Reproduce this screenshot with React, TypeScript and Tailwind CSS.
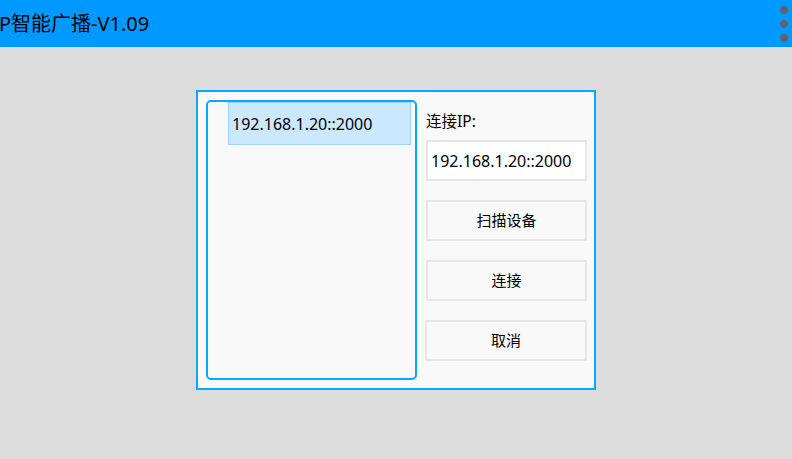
import React from "react";

const FONT = { fontFamily: '"Noto Sans", "Noto Sans CJK SC", sans-serif' };

export default function App() {
  const ip = "192.168.1.20::2000";
  return (
    <div className="w-[792px] h-[459px] bg-[#dcdcdc] overflow-hidden text-black" style={FONT}>
      {/* 标题栏 */}
      <div className="h-[47px] bg-[#0099ff] flex items-center justify-between">
        <span className="text-[20px] leading-none -ml-[1px]">P智能广播-V1.09</span>
        <div className="flex flex-col gap-[6px] pr-[4px]">
          <span className="block w-[8px] h-[8px] rounded-full bg-[#5f6272]" />
          <span className="block w-[8px] h-[8px] rounded-full bg-[#5f6272]" />
          <span className="block w-[8px] h-[8px] rounded-full bg-[#5f6272]" />
        </div>
      </div>

      {/* 连接对话框 */}
      <div className="ml-[196px] mt-[43px] w-[400px] h-[300px] border-2 border-[#00aaff] bg-[#f9f9f9] pl-2 pt-2 pr-[7px] flex gap-[9px]">
        <div className="w-[211px] shrink-0 h-[280px] border-2 border-[#00aaff] rounded-[5px] pl-[20px] pr-[4px]">
          <div className="h-[43px] bg-[#cce8ff] border border-[#99d1ff] flex items-center pl-[3px] text-[16px]">
            {ip}
          </div>
        </div>
        <div className="w-[161px] shrink-0 flex flex-col">
          <div className="h-[40px] flex items-end pb-[7px] text-[15.5px]">连接IP:</div>
          <div className="h-[41px] border-2 border-[#e6e6e6] bg-white flex items-center pl-[3px] text-[16px]">
            {ip}
          </div>
          <button className="mt-[19px] h-[41px] border-2 border-[#e6e6e6] bg-[#f9f9f9] text-[15px]">扫描设备</button>
          <button className="mt-[19px] h-[41px] border-2 border-[#e6e6e6] bg-[#f9f9f9] text-[15px]">连接</button>
          <button className="mt-[19px] h-[41px] border-2 border-[#e6e6e6] bg-[#f9f9f9] text-[15px] -ml-[1px]">取消</button>
        </div>
      </div>
    </div>
  );
}
